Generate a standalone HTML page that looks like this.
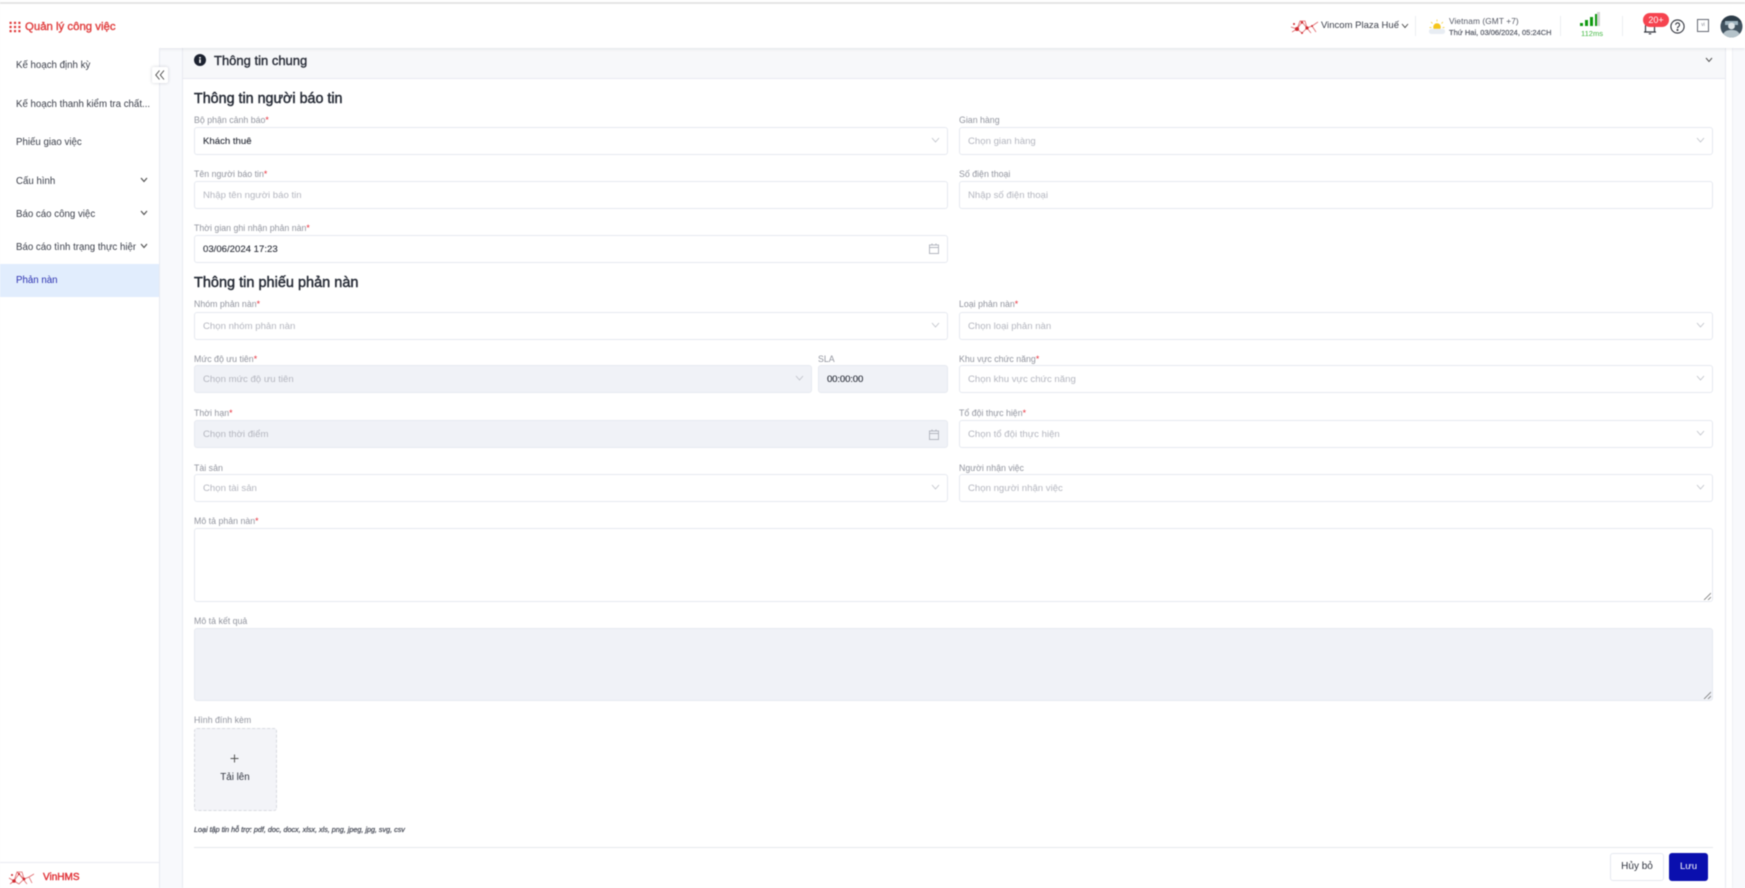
<!DOCTYPE html>
<html lang="vi"><head><meta charset="utf-8"><title>Quản lý công việc</title>
<style>
*{box-sizing:border-box}
html,body{margin:0;padding:0;width:1745px;height:888px;overflow:hidden;background:#f8f9fc;font-family:"Liberation Sans","Noto Sans CJK SC",sans-serif;color:#1f2430}
#r{position:relative;width:1745px;height:888px;overflow:hidden;filter:blur(.5px)}
.a{position:absolute;white-space:nowrap}
.lb{position:absolute;white-space:nowrap;font-size:8.8px;line-height:14px;color:#92959f}
.lb b{color:#e8333f;font-weight:normal}
.f{position:absolute;height:28px;background:#fff;border:1px solid #e6e9f0;border-radius:3px;font-size:9.6px;line-height:27px;padding-left:8px;color:#b4b6bf;white-space:nowrap}
.f.d{background:#f0f2f7}
.f.v{color:#262a35;-webkit-text-stroke:.1px #262a35}
.f svg{position:absolute;right:7px;top:9px}
.h{position:absolute;white-space:nowrap;font-size:14.3px;line-height:18px;color:#262b36;-webkit-text-stroke:.45px #262b36}
.m{position:absolute;left:16px;white-space:nowrap;font-size:9.7px;line-height:14px;color:#3a3e49}
.vl{position:absolute;width:1px;background:#eceef2}
</style></head><body><div id="r">

<!-- background panels -->
<div class="a" style="left:182px;top:48px;width:1544px;height:840px;background:#fff;border-left:1px solid #e8eaf1;border-right:1px solid #e8eaf1"></div>
<div class="a" style="left:1726px;top:48px;width:7px;height:840px;background:#fff;border-right:1px solid #eef0f5"></div>
<div class="a" style="left:183px;top:48px;width:1542px;height:31px;background:#f7f8fa;border-bottom:1px solid #e8eaf0"></div>

<!-- header -->
<div class="a" style="left:0;top:0;width:1745px;height:48px;background:#fff;box-shadow:0 1px 3px rgba(30,40,60,.1)"></div>
<div class="a" style="left:0;top:2px;width:1745px;height:2px;background:#e4e4e4"></div>
<svg class="a" style="left:9px;top:21px" width="12" height="12" viewBox="0 0 12 12" fill="#e03a3a"><rect x=".5" y=".8" width="2.2" height="2.2" rx=".5"/><rect x="4.9" y=".8" width="2.2" height="2.2" rx=".5"/><rect x="9.3" y=".8" width="2.2" height="2.2" rx=".5"/><rect x=".5" y="4.9" width="2.2" height="2.2" rx=".5"/><rect x="4.9" y="4.9" width="2.2" height="2.2" rx=".5"/><rect x="9.3" y="4.9" width="2.2" height="2.2" rx=".5"/><rect x=".5" y="9" width="2.2" height="2.2" rx=".5"/><rect x="4.9" y="9" width="2.2" height="2.2" rx=".5"/><rect x="9.3" y="9" width="2.2" height="2.2" rx=".5"/></svg>
<div class="a" style="left:25px;top:20px;font-size:11.4px;line-height:14px;color:#e03f3f;-webkit-text-stroke:.4px #e03f3f">Quản lý công việc</div>

<svg class="a" style="left:1290px;top:19px" width="29" height="16" viewBox="0 0 29 16" fill="none" stroke="#e0666a" stroke-width=".8"><path d="M1 8 7 10 12 3 17 9 22 7 28 3M7 10 10 2 12 3 21 14M2 13 7 10 12 14 17 9 15 2 10 2M22 7 26 13"/><g fill="#d02a30" stroke="none"><circle cx="7" cy="10" r="2"/><circle cx="17" cy="9" r="1.6"/><circle cx="12" cy="3.500" r="1.2"/><circle cx="12" cy="14" r="1"/><circle cx="22" cy="7" r="1"/><circle cx="4" cy="5" r="1"/></g></svg>
<div class="a" style="left:1321px;top:19px;font-size:9.5px;line-height:14px;color:#3a3e49">Vincom Plaza Huế</div>
<svg class="a" style="left:1401px;top:23px" width="8" height="6" viewBox="0 0 8 6" fill="none" stroke="#444" stroke-width=".9"><path d="M1 1 4 4.500 7 1"/></svg>
<div class="vl" style="left:1415px;top:16px;height:20px"></div>

<svg class="a" style="left:1428px;top:18px" width="18" height="18" viewBox="0 0 18 18"><circle cx="9" cy="9" r="3.8" fill="#f5c518"/><g stroke="#f5d65c" stroke-width=".9"><path d="M9 1.500V3.500M3 4 4.500 5.500M15 4 13.500 5.500M1.500 9.500H3.500M16.500 9.500H14.500"/></g><path d="M3.500 16a2.600 2.600 0 0 1 0-5.200h11a2.600 2.600 0 0 1 0 5.200z" fill="#e8edf3"/></svg>
<div class="a" style="left:1449px;top:15px;font-size:8.300px;line-height:12px;color:#555965;letter-spacing:.1px">Vietnam (GMT +7)</div>
<div class="a" style="left:1449px;top:27px;font-size:7.500px;line-height:11px;color:#555965;-webkit-text-stroke:.2px #555965">Thứ Hai, 03/06/2024, 05:24CH</div>
<div class="vl" style="left:1560px;top:16px;height:20px"></div>

<div class="a" style="left:1580px;top:23px;width:3px;height:3px;background:#109a10"></div>
<div class="a" style="left:1585px;top:20px;width:3px;height:6px;background:#109a10"></div>
<div class="a" style="left:1590px;top:17px;width:3px;height:9px;background:#109a10"></div>
<div class="a" style="left:1595px;top:14px;width:3px;height:12px;background:#109a10"></div>
<div class="a" style="left:1597px;top:12px;width:3px;height:14px;background:#d5d5d5"></div>
<div class="a" style="left:1581px;top:28px;font-size:7.500px;line-height:11px;color:#3fb83f">112ms</div>
<div class="vl" style="left:1622px;top:16px;height:20px"></div>

<svg class="a" style="left:1642px;top:20px" width="16" height="15" viewBox="0 0 16 15" fill="none" stroke="#33363f" stroke-width="1.2"><path d="M3.500 12V6a4.500 4.500 0 0 1 9 0v6M2 12H14M6.800 13.800H9.200"/></svg>
<div class="a" style="left:1643px;top:13px;width:26px;height:14px;background:#f6434f;border-radius:7px;color:#fff;font-size:9px;line-height:14px;text-align:center">20+</div>
<svg class="a" style="left:1670px;top:19px" width="15" height="15" viewBox="0 0 15 15" fill="none" stroke="#33363f" stroke-width="1.1"><circle cx="7.500" cy="7.500" r="6.600"/><path d="M5.600 5.800a2 2 0 1 1 3 1.800c-.7.4-1.100.8-1.100 1.600"/><circle cx="7.500" cy="11" r=".5" fill="#33363f"/></svg>
<div class="a" style="left:1697px;top:19px;width:12px;height:13px;border:1px solid #666a75;font-size:5px;line-height:11px;text-align:center;color:#8a8d96">vi</div>
<svg class="a" style="left:1720px;top:15px" width="23" height="23" viewBox="0 0 23 23"><defs><clipPath id="c"><circle cx="11.500" cy="11.500" r="11"/></clipPath></defs><g clip-path="url(#c)"><rect width="23" height="23" fill="#41525f"/><rect x="0" y="0" width="23" height="7" fill="#2d3c48"/><rect x="5" y="6" width="13" height="4" fill="#9fb4bf"/><circle cx="11.500" cy="11" r="3.400" fill="#dfe5e8"/><path d="M2 23c1-7 5-8 9.500-8s8 1 9.500 8z" fill="#b5c3ca"/></g></svg>

<!-- sidebar -->
<div class="a" style="left:0;top:48px;width:160px;height:840px;background:#fff;border-right:1px solid #e8eaf1"></div>
<div class="a" style="left:0;top:264px;width:159px;height:33px;background:#e1edfd"></div>
<div class="m" style="top:59px">Kế hoạch định kỳ</div>
<div class="m" style="top:98px">Kế hoạch thanh kiểm tra chất...</div>
<div class="m" style="top:136px">Phiếu giao việc</div>
<div class="m" style="top:175px">Cấu hình</div>
<div class="m" style="top:208px">Báo cáo công việc</div>
<div class="m" style="top:241px;width:120px;overflow:hidden">Báo cáo tình trạng thực hiện</div>
<div class="m" style="top:274px;color:#2a30b0">Phản nàn</div>
<svg class="a" style="left:140px;top:177px" width="8" height="6" viewBox="0 0 8 6" fill="none" stroke="#555" stroke-width="1.2"><path d="M1 1 4 4.500 7 1"/></svg>
<svg class="a" style="left:140px;top:210px" width="8" height="6" viewBox="0 0 8 6" fill="none" stroke="#555" stroke-width="1.2"><path d="M1 1 4 4.500 7 1"/></svg>
<svg class="a" style="left:140px;top:243px" width="8" height="6" viewBox="0 0 8 6" fill="none" stroke="#555" stroke-width="1.2"><path d="M1 1 4 4.500 7 1"/></svg>
<div class="a" style="left:152px;top:67px;width:16px;height:16px;background:#fff;border-radius:2px;box-shadow:0 0 3px rgba(40,50,70,.22)"></div>
<svg class="a" style="left:155px;top:70px" width="10" height="10" viewBox="0 0 10 10" fill="none" stroke="#444" stroke-width=".9"><path d="M4.500 .5 .8 5 4.500 9.500M9 .5 5.300 5 9 9.500"/></svg>
<div class="a" style="left:0;top:862px;width:159px;height:1px;background:#e8eaf1"></div>
<svg class="a" style="left:8px;top:871px" width="27" height="15" viewBox="0 0 27 15" fill="none" stroke="#e0666a" stroke-width=".8"><path d="M1 7 6 10 11 3 16 8 21 6 26 3M6 10 9 1 11 3 19 13M2 13 6 10 11 13 16 8 14 1 9 1M21 6 24 12"/><g fill="#d02a30" stroke="none"><circle cx="6" cy="10" r="1.800"/><circle cx="16" cy="8" r="1.400"/><circle cx="11" cy="3" r="1.100"/><circle cx="4" cy="4" r="1"/></g></svg>
<div class="a" style="left:43px;top:871px;font-size:10px;line-height:14px;color:#e03036;-webkit-text-stroke:.4px #e03036">VinHMS</div>

<!-- card header -->
<svg class="a" style="left:194px;top:54px" width="12" height="12" viewBox="0 0 12 12"><circle cx="6" cy="6" r="6" fill="#1c2230"/><rect x="5.200" y="5.200" width="1.600" height="3.800" fill="#fff"/><rect x="5.200" y="3" width="1.600" height="1.500" fill="#fff"/></svg>
<div class="a" style="left:214px;top:53px;font-size:13px;line-height:16px;color:#2b2f3a;-webkit-text-stroke:.4px #2b2f3a">Thông tin chung</div>
<svg class="a" style="left:1705px;top:57px" width="8" height="6" viewBox="0 0 8 6" fill="none" stroke="#555" stroke-width="1"><path d="M1 1 4 4.500 7 1"/></svg>

<!-- form 1 -->
<div class="h" style="left:194px;top:90px">Thông tin người báo tin</div>
<div class="lb" style="left:194px;top:113px">Bộ phận cảnh báo<b>*</b></div>
<div class="f v" style="left:194px;top:127px;width:754px">Khách thuê<svg width="9" height="7" viewBox="0 0 9 7" fill="none" stroke="#c0c3ca" stroke-width=".9"><path d="M1 1 4.500 5 8 1"/></svg></div>
<div class="lb" style="left:959px;top:113px">Gian hàng</div>
<div class="f" style="left:959px;top:127px;width:754px">Chọn gian hàng<svg width="9" height="7" viewBox="0 0 9 7" fill="none" stroke="#c0c3ca" stroke-width=".9"><path d="M1 1 4.500 5 8 1"/></svg></div>

<div class="lb" style="left:194px;top:167px">Tên người báo tin<b>*</b></div>
<div class="f" style="left:194px;top:181px;width:754px">Nhập tên người báo tin</div>
<div class="lb" style="left:959px;top:167px">Số điện thoại</div>
<div class="f" style="left:959px;top:181px;width:754px">Nhập số điện thoại</div>

<div class="lb" style="left:194px;top:221px">Thời gian ghi nhận phản nàn<b>*</b></div>
<div class="f v" style="left:194px;top:235px;width:754px">03/06/2024 17:23<svg style="top:7px;right:8px" width="10" height="11" viewBox="0 0 10 11" fill="none" stroke="#b4b7c0"><path d="M.5 2H9.500V10.500H.5ZM.5 4.500H9.500M3 .5V2.500M7 .5V2.500"/></svg></div>

<!-- form 2 -->
<div class="h" style="left:194px;top:274px;font-size:14.5px">Thông tin phiếu phản nàn</div>
<div class="lb" style="left:194px;top:297px">Nhóm phản nàn<b>*</b></div>
<div class="f" style="left:194px;top:312px;width:754px">Chọn nhóm phản nàn<svg width="9" height="7" viewBox="0 0 9 7" fill="none" stroke="#c0c3ca" stroke-width=".9"><path d="M1 1 4.500 5 8 1"/></svg></div>
<div class="lb" style="left:959px;top:297px">Loại phản nàn<b>*</b></div>
<div class="f" style="left:959px;top:312px;width:754px">Chọn loại phản nàn<svg width="9" height="7" viewBox="0 0 9 7" fill="none" stroke="#c0c3ca" stroke-width=".9"><path d="M1 1 4.500 5 8 1"/></svg></div>

<div class="lb" style="left:194px;top:352px">Mức độ ưu tiên<b>*</b></div>
<div class="f d" style="left:194px;top:365px;width:618px">Chọn mức độ ưu tiên<svg width="9" height="7" viewBox="0 0 9 7" fill="none" stroke="#c0c3ca" stroke-width=".9"><path d="M1 1 4.500 5 8 1"/></svg></div>
<div class="lb" style="left:818px;top:352px">SLA</div>
<div class="f d v" style="left:818px;top:365px;width:130px;letter-spacing:-.15px">00:00:00</div>
<div class="lb" style="left:959px;top:352px">Khu vực chức năng<b>*</b></div>
<div class="f" style="left:959px;top:365px;width:754px">Chọn khu vực chức năng<svg width="9" height="7" viewBox="0 0 9 7" fill="none" stroke="#c0c3ca" stroke-width=".9"><path d="M1 1 4.500 5 8 1"/></svg></div>

<div class="lb" style="left:194px;top:405.500px">Thời hạn<b>*</b></div>
<div class="f d" style="left:194px;top:420px;width:754px">Chọn thời điểm<svg style="top:8px;right:8px" width="10" height="11" viewBox="0 0 10 11" fill="none" stroke="#b4b7c0"><path d="M.5 2H9.500V10.500H.5ZM.5 4.500H9.500M3 .5V2.500M7 .5V2.500"/></svg></div>
<div class="lb" style="left:959px;top:405.500px">Tổ đội thực hiện<b>*</b></div>
<div class="f" style="left:959px;top:420px;width:754px">Chọn tổ đội thực hiện<svg width="9" height="7" viewBox="0 0 9 7" fill="none" stroke="#c0c3ca" stroke-width=".9"><path d="M1 1 4.500 5 8 1"/></svg></div>

<div class="lb" style="left:194px;top:461px">Tài sản</div>
<div class="f" style="left:194px;top:474px;width:754px">Chọn tài sản<svg width="9" height="7" viewBox="0 0 9 7" fill="none" stroke="#c0c3ca" stroke-width=".9"><path d="M1 1 4.500 5 8 1"/></svg></div>
<div class="lb" style="left:959px;top:461px">Người nhận việc</div>
<div class="f" style="left:959px;top:474px;width:754px">Chọn người nhận việc<svg width="9" height="7" viewBox="0 0 9 7" fill="none" stroke="#c0c3ca" stroke-width=".9"><path d="M1 1 4.500 5 8 1"/></svg></div>

<div class="lb" style="left:194px;top:514px">Mô tả phản nàn<b>*</b></div>
<div class="f" style="left:194px;top:528px;width:1519px;height:74px"><svg style="top:auto;bottom:1px;right:1px" width="8" height="8" viewBox="0 0 8 8" stroke="#777" stroke-width=".8"><path d="M1 8 8 1M5 8 8 5"/></svg></div>
<div class="lb" style="left:194px;top:614px">Mô tả kết quả</div>
<div class="f d" style="left:194px;top:628px;width:1519px;height:73px"><svg style="top:auto;bottom:1px;right:1px" width="8" height="8" viewBox="0 0 8 8" stroke="#777" stroke-width=".8"><path d="M1 8 8 1M5 8 8 5"/></svg></div>

<div class="lb" style="left:194px;top:713px">Hình đính kèm</div>
<div class="a" style="left:194px;top:728px;width:83px;height:83px;background:#f3f4f8;border:1px dashed #d8dae0;border-radius:3px"></div>
<svg class="a" style="left:230px;top:754px" width="9" height="9" viewBox="0 0 9 9" stroke="#555" stroke-width="1"><path d="M4.500 .5V8.500M.5 4.500H8.500"/></svg>
<div class="a" style="left:194px;top:771px;width:82px;text-align:center;font-size:9.800px;line-height:14px;color:#30343f">Tải lên</div>
<div class="a" style="left:194px;top:824px;font-size:7.200px;line-height:11px;font-style:italic;color:#4a4e5a;-webkit-text-stroke:.25px #4a4e5a">Loại tập tin hỗ trợ: pdf, doc, docx, xlsx, xls, png, jpeg, jpg, svg, csv</div>
<div class="a" style="left:194px;top:847px;width:1519px;height:1px;background:#e6e8ec"></div>
<div class="a" style="left:1610px;top:853px;width:54px;height:28px;background:#fff;border:1px solid #e6e9f0;border-radius:3px;font-size:10px;line-height:26px;text-align:center;color:#30343f">Hủy bỏ</div>
<div class="a" style="left:1669px;top:853px;width:39px;height:28px;background:#0a0fae;border-radius:3px;font-size:9.600px;line-height:28px;text-align:center;color:#fff">Lưu</div>

</div></body></html>
